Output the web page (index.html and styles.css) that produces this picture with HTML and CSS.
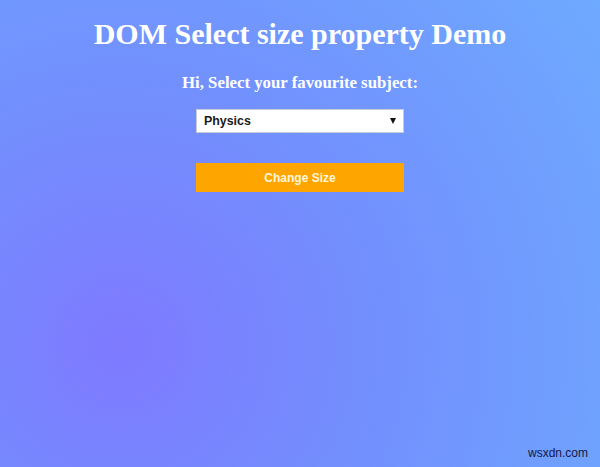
FILE: index.html
```html
<!DOCTYPE html>
<html lang="en">
<head>
<meta charset="utf-8">
<title>DOM Select size property Demo</title>
<link rel="stylesheet" href="styles.css">
</head>
<body>
<main class="page">
  <h1 class="title">DOM Select size property Demo</h1>
  <h3 class="subtitle">Hi, Select your favourite subject:</h3>
  <div class="select-wrap">
    <select class="subject" name="subject">
      <option>Physics</option>
      <option>Maths</option>
      <option>Chemistry</option>
      <option>Biology</option>
    </select>
    <svg class="arrow" width="6" height="6" viewBox="0 0 6 6"><polygon points="0,0 6,0 3,6" fill="#111"/></svg>
  </div>
  <button class="change-btn" type="button">Change Size</button>
</main>
<div class="watermark">wsxdn.com</div>
</body>
</html>
```
FILE: styles.css
```css
html, body {
  margin: 0;
  padding: 0;
  height: 100%;
}
body {
  background: radial-gradient(circle farthest-corner at 20% 74%, #7e7aff 0%, #7290fd 45%, #6eaaff 100%);
  font-family: "Liberation Serif", "Times New Roman", serif;
  overflow: hidden;
  position: relative;
}
.page {
  display: flex;
  flex-direction: column;
  align-items: center;
  padding-top: 17px;
}
.title {
  margin: 0;
  font-size: 30px;
  line-height: 34px;
  font-weight: bold;
  color: #fff;
}
.subtitle {
  margin: 22px 0 0;
  font-size: 16.8px;
  line-height: 20px;
  font-weight: bold;
  color: #fff;
}
.select-wrap {
  position: relative;
  margin-top: 16px;
  width: 208px;
  height: 24px;
}
.subject {
  appearance: none;
  -webkit-appearance: none;
  display: block;
  width: 208px;
  height: 24px;
  margin: 0;
  border: 1px solid #c8ccd8;
  border-radius: 0;
  background: #fff;
  padding: 0 0 0 7px;
  font-family: "Liberation Sans", Arial, sans-serif;
  font-size: 12.4px;
  font-weight: bold;
  color: #1a1a1a;
  outline: none;
}
.arrow {
  position: absolute;
  right: 8px;
  top: 9px;
  pointer-events: none;
}
.change-btn {
  margin-top: 30px;
  width: 208px;
  height: 29px;
  border: none;
  border-radius: 0;
  background: #ffa500;
  color: #fff6dc;
  font-family: "Liberation Sans", Arial, sans-serif;
  font-size: 12px;
  font-weight: bold;
  cursor: pointer;
}
.watermark {
  position: absolute;
  right: 12px;
  bottom: 7px;
  font-family: "Liberation Sans", Arial, sans-serif;
  font-size: 12px;
  color: #141a45;
}
```
